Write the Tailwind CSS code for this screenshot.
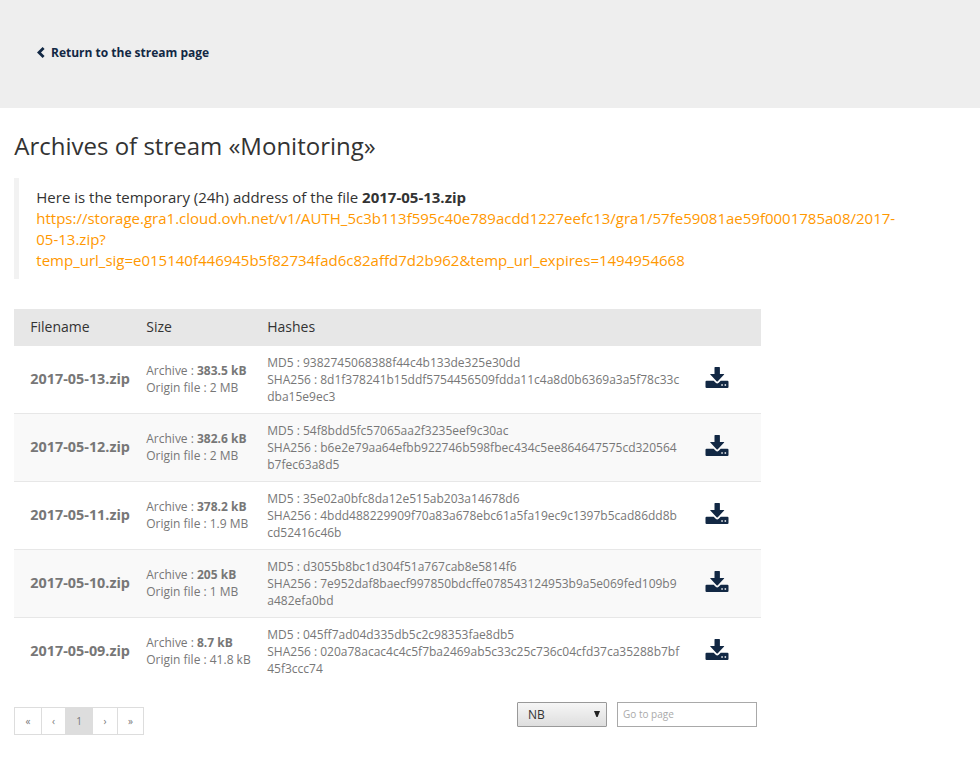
<!DOCTYPE html>
<html lang="en">
<head>
<meta charset="utf-8">
<title>Archives of stream «Monitoring»</title>
<script src="https://cdn.jsdelivr.net/npm/@tailwindcss/browser@4"></script>
</head>
<body class="bg-white font-['Open_Sans',sans-serif] text-[#333]">
<svg class="hidden">
  <symbol id="download" viewBox="-0.5 0 24 21">
    <path d="M9 .6Q9 0 9.600 0h4.200q.6 0 .6.600V7h3.900q.8 0 .3.600l-6.300 6.700q-.6.600-1.200 0L4.800 7.600Q4.300 7 5.100 7H9z"/>
    <path fill-rule="evenodd" d="M1.100 13.700h7.100l2 2.100q1.500 1.400 3 0l2-2.100h6.700q1.100 0 1.100 1.100v5.100q0 1.100-1.100 1.100H1.100Q0 21 0 19.900v-5.100Q0 13.700 1.100 13.700zM15.800 17.300v1.500h1.500v-1.500zM19.100 17.300v1.500h1.500v-1.500z"/>
  </symbol>
</svg>
<header class="h-[108px] bg-[#eee] pt-[44px] pl-[37px]">
  <a class="flex items-center text-[12px] leading-[18px] font-bold text-[#122844]">
    <svg class="mr-[6px] -mt-px h-[11px] w-[8px]" viewBox="0 0 8 11" fill="none" stroke="currentColor" stroke-width="2.8"><path d="M6.600 1 2 5.500l4.600 4.500"/></svg>Return to the stream page</a>
</header>
<main class="pl-[14px]">
  <h1 class="pt-[21px] pl-[0.25px] text-[24px] leading-[34px]">Archives of stream «Monitoring»</h1>
  <blockquote class="mt-[15px] h-[101px] border-l-[5px] border-[#f2f2f2] pt-[9px] pl-[17.300px] text-[15.010px] leading-[21px]">
    <p>Here is the temporary (24h) address of the file <b>2017-05-13.zip</b></p>
    <a class="block whitespace-nowrap text-[#ff9800]">https://storage.gra1.cloud.ovh.net/v1/AUTH_5c3b113f595c40e789acdd1227eefc13/gra1/57fe59081ae59f0001785a08/2017-<br>05-13.zip?<br>temp_url_sig=e015140f446945b5f82734fad6c82affd7d2b962&amp;temp_url_expires=1494954668</a>
  </blockquote>
  <table class="mt-[30px] w-[747px] table-fixed border-separate border-spacing-0 text-left text-[12px] leading-[17px] text-[#777]">
    <colgroup><col class="w-[132px]"><col class="w-[121px]"><col class="w-[438px]"><col class="w-[56px]"></colgroup>
    <thead class="bg-[#e7e7e7] text-[14px] text-[#333]">
      <tr class="h-[37px] [&_th]:p-0 [&_th]:pb-[2px] [&_th]:pl-[0.25px] [&_th]:font-normal [&_th:first-child]:pl-[16.250px]"><th>Filename</th><th>Size</th><th>Hashes</th><th></th></tr>
    </thead>
    <tbody class="[&_td]:border-b [&_td]:border-[#e7e7e7] [&_td]:p-0 [&_td]:pl-[0.25px] [&_tr]:h-[68px] [&_tr:nth-child(even)]:bg-[#f9f9f9] [&_tr:last-child_td]:border-transparent [&_td:first-child]:pl-[16.250px] [&_td:first-child]:pb-[2px] [&_td:nth-child(2)]:pb-[2px] [&_td:first-child]:text-[14.400px] [&_td:first-child]:font-bold [&_svg]:h-[21px] [&_svg]:w-[24px] [&_svg]:fill-[#122844] [&_svg]:-mt-[5px]">
      <tr><td>2017-05-13.zip</td><td>Archive : <b>383.5 kB</b><br>Origin file : 2 MB</td><td>MD5 : 9382745068388f44c4b133de325e30dd<br>SHA256 : 8d1f378241b15ddf5754456509fdda11c4a8d0b6369a3a5f78c33c<br>dba15e9ec3</td><td><svg><use href="#download"/></svg></td></tr>
      <tr><td>2017-05-12.zip</td><td>Archive : <b>382.6 kB</b><br>Origin file : 2 MB</td><td>MD5 : 54f8bdd5fc57065aa2f3235eef9c30ac<br>SHA256 : b6e2e79aa64efbb922746b598fbec434c5ee864647575cd320564<br>b7fec63a8d5</td><td><svg><use href="#download"/></svg></td></tr>
      <tr><td>2017-05-11.zip</td><td>Archive : <b>378.2 kB</b><br>Origin file : 1.9 MB</td><td>MD5 : 35e02a0bfc8da12e515ab203a14678d6<br>SHA256 : 4bdd488229909f70a83a678ebc61a5fa19ec9c1397b5cad86dd8b<br>cd52416c46b</td><td><svg><use href="#download"/></svg></td></tr>
      <tr><td>2017-05-10.zip</td><td>Archive : <b>205 kB</b><br>Origin file : 1 MB</td><td>MD5 : d3055b8bc1d304f51a767cab8e5814f6<br>SHA256 : 7e952daf8baecf997850bdcffe078543124953b9a5e069fed109b9<br>a482efa0bd</td><td><svg><use href="#download"/></svg></td></tr>
      <tr><td>2017-05-09.zip</td><td>Archive : <b>8.7 kB</b><br>Origin file : 41.8 kB</td><td>MD5 : 045ff7ad04d335db5c2c98353fae8db5<br>SHA256 : 020a78acac4c4c5f7ba2469ab5c33c25c736c04cfd37ca35288b7bf<br>45f3ccc74</td><td><svg><use href="#download"/></svg></td></tr>
    </tbody>
  </table>
  <div class="flex w-[743px] items-start pt-[16px]">
    <nav class="mt-[5px] flex h-[28px] w-[130px] border border-[#ddd] text-center text-[10px] leading-[26px] text-[#777]">
      <a class="w-[27px] border-r border-[#ddd]">«</a><a class="w-[23px]">‹</a><a class="w-[28px] bg-[#ddd]">1</a><a class="w-[25px] border-r border-[#ddd]">›</a><a class="w-[25px]">»</a>
    </nav>
    <div class="ml-auto flex h-[25px] w-[90px] items-center justify-between rounded-[1px] border border-[#999] bg-linear-to-b from-[#f6f6f6] to-[#dedede] pr-[6px] pl-[10px] text-[12px] leading-[17px]">NB<svg class="mb-[2px] h-[6px] w-[6px] fill-[#222]" viewBox="0 0 6 6"><path d="M0 0h6L3.600 6H2.400z"/></svg></div>
    <input class="ml-[10px] h-[25px] w-[140px] border border-[#a9a9a9] px-[5px] pb-px text-[10px] placeholder:text-[#aaa]" placeholder="Go to page">
  </div>
</main>
</body>
</html>
